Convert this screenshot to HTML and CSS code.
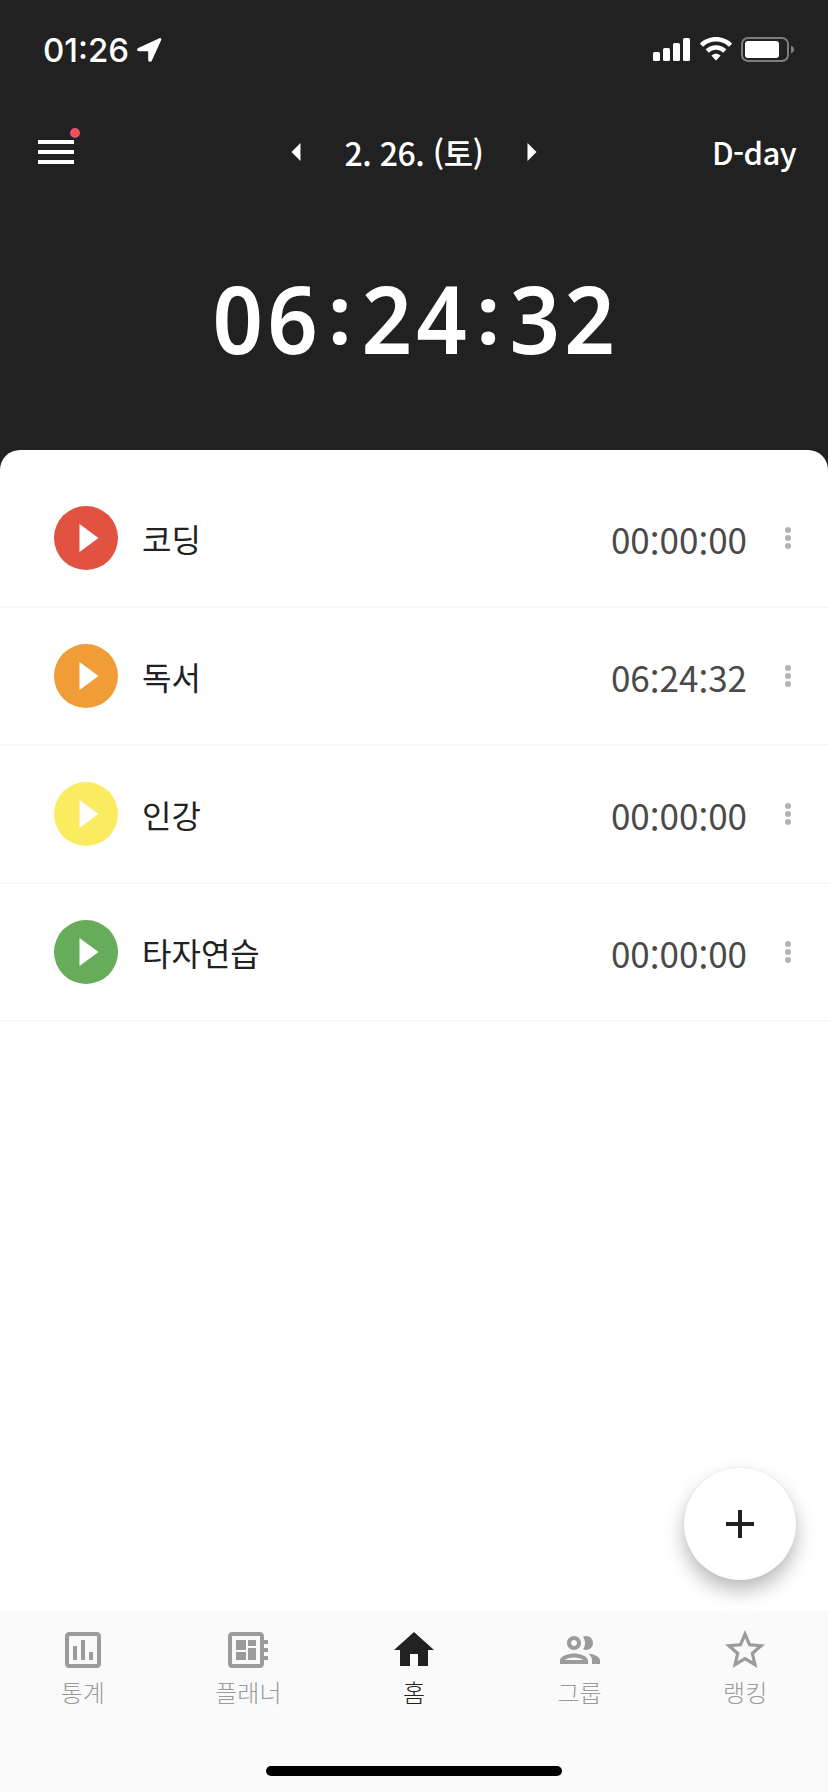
FILE: index.html
```
<!DOCTYPE html>
<html lang="ko">
<head>
    <meta charset="UTF-8">
    <meta name="viewport" content="width=device-width, initial-scale=1.0">
    <title>홈</title>
    <link rel="stylesheet" href="styles.css">
</head>
<body>
    <div class="app">
        <div class="status-bar">
            <div class="status-left">
                <span class="clock">01:26</span>
                <svg class="location" width="26" height="26" viewBox="0 0 26 26"><path d="M2.2 11 23.400 1.200c1.300-.6 2.300.4 1.800 1.700L15.900 23.600c-.9 2-3.700 1.500-3.700-.8V15.200c0-.8-.2-1-1-1H3C.7 14.200.4 11.900 2.200 11z"/></svg>
            </div>
            <div class="status-right">
                <svg width="37" height="26" viewBox="0 0 37 26">
                    <rect x="0" y="15" width="7" height="9" rx="1.5"/>
                    <rect x="10" y="11" width="7" height="13" rx="1.5"/>
                    <rect x="20" y="6" width="7" height="18" rx="1.5"/>
                    <rect x="30" y="1" width="7" height="23" rx="1.5"/>
                </svg>
                <svg class="wifi" width="32" height="26" viewBox="0 0 32 26">
                    <path d="M16 0C9.900 0 4.300 2.300.2 6.200c-.2.200-.2.500 0 .7l2.500 2.500c.2.200.5.200.7 0C6.700 6.300 11.100 4.500 16 4.500s9.300 1.800 12.600 4.900c.2.200.5.200.7 0l2.500-2.500c.2-.2.200-.5 0-.7C27.700 2.300 22.100 0 16 0z"/>
                    <path d="M16 8.300c-3.800 0-7.300 1.400-10 3.800-.2.200-.2.500 0 .7l2.600 2.600c.2.200.5.200.7 0 1.800-1.600 4.100-2.600 6.700-2.600s4.900 1 6.700 2.600c.2.200.5.200.7 0l2.600-2.600c.2-.2.200-.5 0-.7-2.700-2.400-6.200-3.800-10-3.800z"/>
                    <path d="M16 16.700c-1.600 0-3.100.6-4.200 1.500-.3.200-.3.500 0 .8l3.800 4.200c.2.200.6.200.8 0l3.800-4.200c.3-.3.300-.6 0-.8-1.100-.9-2.600-1.500-4.200-1.500z"/>
                </svg>
                <svg width="54" height="26" viewBox="0 0 54 26">
                    <rect class="battery-frame" x="1" y="1" width="46" height="23" rx="6"/>
                    <rect x="4" y="4" width="34" height="17" rx="3"/>
                    <path class="battery-cap" d="M50 8.500c2 .8 3 2.200 3 4s-1 3.200-3 4z"/>
                </svg>
            </div>
        </div>

        <div class="top-bar">
            <button class="menu-btn" aria-label="메뉴">
                <svg width="48" height="48" viewBox="0 0 24 24"><path d="M3 18h18v-2H3v2zm0-5h18v-2H3v2zm0-7v2h18V6H3z"/></svg>
                <span class="badge"></span>
            </button>
            <div class="date-nav">
                <svg width="10" height="18" viewBox="0 0 10 18"><path d="M9.500 0v18L.5 9z"/></svg>
                <span class="date">2. 26. (토)</span>
                <svg width="10" height="18" viewBox="0 0 10 18"><path d="M.5 0v18l9-9z"/></svg>
            </div>
            <button class="dday">D-day</button>
        </div>

        <div class="timer">
            <span class="digits">06</span><span class="colon">:</span><span class="digits">24</span><span class="colon">:</span><span class="digits">32</span>
        </div>

        <main class="sheet">
            <div class="subject">
                <svg class="play red" width="64" height="64" viewBox="0 0 64 64"><circle cx="32" cy="32" r="32"/><path d="M25.500 18v28l19-14z"/></svg>
                <span class="name">코딩</span>
                <span class="time">00<i>:</i>00<i>:</i>00</span>
                <svg class="more" width="6" height="22" viewBox="0 0 6 22"><circle cx="3" cy="3" r="3"/><circle cx="3" cy="11" r="3"/><circle cx="3" cy="19" r="3"/></svg>
            </div>
            <div class="subject">
                <svg class="play orange" width="64" height="64" viewBox="0 0 64 64"><circle cx="32" cy="32" r="32"/><path d="M25.500 18v28l19-14z"/></svg>
                <span class="name">독서</span>
                <span class="time">06<i>:</i>24<i>:</i>32</span>
                <svg class="more" width="6" height="22" viewBox="0 0 6 22"><circle cx="3" cy="3" r="3"/><circle cx="3" cy="11" r="3"/><circle cx="3" cy="19" r="3"/></svg>
            </div>
            <div class="subject">
                <svg class="play yellow" width="64" height="64" viewBox="0 0 64 64"><circle cx="32" cy="32" r="32"/><path d="M25.500 18v28l19-14z"/></svg>
                <span class="name">인강</span>
                <span class="time">00<i>:</i>00<i>:</i>00</span>
                <svg class="more" width="6" height="22" viewBox="0 0 6 22"><circle cx="3" cy="3" r="3"/><circle cx="3" cy="11" r="3"/><circle cx="3" cy="19" r="3"/></svg>
            </div>
            <div class="subject">
                <svg class="play green" width="64" height="64" viewBox="0 0 64 64"><circle cx="32" cy="32" r="32"/><path d="M25.500 18v28l19-14z"/></svg>
                <span class="name">타자연습</span>
                <span class="time">00<i>:</i>00<i>:</i>00</span>
                <svg class="more" width="6" height="22" viewBox="0 0 6 22"><circle cx="3" cy="3" r="3"/><circle cx="3" cy="11" r="3"/><circle cx="3" cy="19" r="3"/></svg>
            </div>
            <button class="fab" aria-label="과목 추가">
                <svg width="48" height="48" viewBox="0 0 24 24"><path d="M19 13h-6v6h-2v-6H5v-2h6V5h2v6h6v2z"/></svg>
            </button>
        </main>

        <footer class="bottom">
            <nav class="tabs">
                <a class="tab">
                    <svg width="48" height="48" viewBox="0 0 24 24"><path d="M19 3H5c-1.100 0-2 .9-2 2v14c0 1.100.9 2 2 2h14c1.100 0 2-.9 2-2V5c0-1.100-.9-2-2-2zm0 16H5V5h14v14zM7 10h2v7H7zm4-3h2v10h-2zm4 6h2v4h-2z"/></svg>
                    <span>통계</span>
                </a>
                <a class="tab">
                    <svg width="48" height="48" viewBox="0 0 24 24"><path d="M22 9V7h-2V5c0-1.100-.9-2-2-2H4c-1.100 0-2 .9-2 2v14c0 1.100.9 2 2 2h14c1.100 0 2-.9 2-2v-2h2v-2h-2v-2h2v-2h-2V9h2zm-4 10H4V5h14v14zM6 13h5v4H6zm6-6h4v3h-4zM6 7h5v5H6zm6 4h4v6h-4z"/></svg>
                    <span>플래너</span>
                </a>
                <a class="tab active">
                    <svg width="48" height="48" viewBox="0 0 24 24"><path d="M10 20v-6h4v6h5v-8h3L12 3 2 12h3v8z"/></svg>
                    <span>홈</span>
                </a>
                <a class="tab">
                    <svg width="48" height="48" viewBox="0 0 24 24"><path d="M9 13.750c-2.340 0-7 1.170-7 3.500V19h14v-1.750c0-2.330-4.660-3.500-7-3.500zM4.340 17c.84-.58 2.870-1.250 4.660-1.250s3.820.67 4.660 1.250H4.340zM9 12c1.930 0 3.500-1.570 3.500-3.500S10.930 5 9 5 5.500 6.570 5.500 8.500 7.070 12 9 12zm0-5c.83 0 1.500.67 1.500 1.500S9.830 10 9 10s-1.500-.67-1.500-1.500S8.170 7 9 7zm7.040 6.810c1.160.84 1.960 1.960 1.960 3.440V19h4v-1.750c0-2.020-3.500-3.170-5.960-3.440zM15 12c1.930 0 3.500-1.570 3.500-3.500S16.930 5 15 5c-.54 0-1.040.13-1.500.35.63.89 1 1.980 1 3.150s-.37 2.260-1 3.150c.46.22.96.35 1.500.35z"/></svg>
                    <span>그룹</span>
                </a>
                <a class="tab">
                    <svg width="48" height="48" viewBox="0 0 24 24"><path d="M22 9.240l-7.190-.62L12 2 9.190 8.630 2 9.240l5.460 4.730L5.820 21 12 17.270 18.180 21l-1.630-7.030L22 9.240zM12 15.400l-3.760 2.270 1-4.280-3.320-2.880 4.380-.38L12 6.100l1.710 4.040 4.380.38-3.320 2.880 1 4.280L12 15.400z"/></svg>
                    <span>랭킹</span>
                </a>
            </nav>
            <div class="home-indicator"></div>
        </footer>
    </div>
</body>
</html>
```
FILE: styles.css
```
* {
    box-sizing: border-box;
}
body {
    margin: 0;
    font-family: 'Noto Sans CJK KR', sans-serif;
    background: #212121;
}
svg {
    display: block;
    flex-shrink: 0;
    fill: currentColor;
}
button {
    padding: 0;
    border: none;
    background: none;
    color: inherit;
    font: inherit;
    cursor: pointer;
}
.app {
    display: flex;
    flex-direction: column;
    width: 828px;
    height: 1792px;
    color: #fff;
}

/* status bar */
.status-bar {
    display: flex;
    justify-content: space-between;
    height: 100px;
    padding: 37px 33px 0 43px;
}
.status-left,
.status-right {
    display: flex;
    height: 26px;
}
.clock {
    width: 93px;
    font-family: 'Inter', sans-serif;
    font-size: 33px;
    font-weight: 500;
    line-height: 26px;
}
.wifi {
    margin: 0 9px 0 10px;
}
.battery-frame {
    fill: none;
    stroke: #7d7d7d;
    stroke-width: 2;
}
.battery-cap {
    fill: #7d7d7d;
}

/* date header */
.top-bar {
    display: grid;
    grid-template-columns: 1fr auto 1fr;
    align-items: center;
    height: 104px;
    padding: 0 32px;
}
.menu-btn {
    position: relative;
    width: 48px;
    height: 48px;
}
.badge {
    position: absolute;
    top: 0;
    right: 0;
    width: 10px;
    height: 10px;
    border: 2px solid #ec4c73;
    border-radius: 50%;
    background: #e65548;
}
.date-nav {
    display: flex;
    align-items: center;
    justify-content: space-between;
    width: 246px;
}
.date,
.dday {
    font-size: 32px;
    font-weight: 500;
    line-height: 48px;
}
.date {
    letter-spacing: -0.5px;
}
.dday {
    justify-self: end;
    font-size: 31px;
    letter-spacing: -0.6px;
}

/* total time */
.timer {
    display: flex;
    justify-content: center;
    align-items: center;
    height: 246px;
    padding: 0 0 18px 4px;
    font-family: 'Noto Sans', sans-serif;
    font-size: 94px;
    font-weight: 600;
    line-height: 130px;
}
.digits {
    letter-spacing: 4.4px;
    transform: scaleX(0.94);
}
.colon {
    width: 32px;
    padding: 0 4px 10px 0;
    font-size: 80px;
    font-weight: 700;
    text-align: center;
}

/* subject list */
.sheet {
    position: relative;
    flex: 1;
    padding-top: 20px;
    border-radius: 20px 20px 0 0;
    background: #fff;
    color: #212121;
}
.subject {
    display: flex;
    align-items: center;
    height: 138px;
    padding: 0 37px 0 54px;
    border-bottom: 2px solid #f8f8f8;
}
.play path {
    fill: #fff;
}
.red {
    color: #e15241;
}
.orange {
    color: #f09d38;
}
.yellow {
    color: #fbeb60;
}
.green {
    color: #67ac5b;
}
.name {
    flex: 1;
    margin-left: 24px;
    font-size: 32px;
}
.time {
    display: flex;
    margin-right: 38px;
    color: #4a4a4a;
    font-size: 35px;
}
.time i {
    font-style: normal;
    transform: translateY(4px);
}
.more {
    color: #b3b3b3;
}
.fab {
    position: absolute;
    right: 32px;
    bottom: 31px;
    display: flex;
    justify-content: center;
    align-items: center;
    width: 112px;
    height: 112px;
    border-radius: 50%;
    background: #fff;
    box-shadow: 0 10px 20px rgba(0, 0, 0, 0.28), 0 0 3px rgba(0, 0, 0, 0.06);
}

/* bottom tabs */
.bottom {
    display: flex;
    flex-direction: column;
    justify-content: space-between;
    align-items: center;
    height: 181px;
    padding: 15px 0 16px;
    background: #fafafa;
    box-shadow: 0 -1px 3px rgba(0, 0, 0, 0.04);
}
.tabs {
    display: flex;
    width: 100%;
}
.tab {
    flex: 1;
    display: flex;
    flex-direction: column;
    align-items: center;
    color: #9b9b9b;
    font-size: 24px;
    font-weight: 300;
    line-height: 36px;
}
.tab.active {
    color: #212121;
}
.home-indicator {
    width: 296px;
    height: 10px;
    border-radius: 5px;
    background: #000;
}
```
